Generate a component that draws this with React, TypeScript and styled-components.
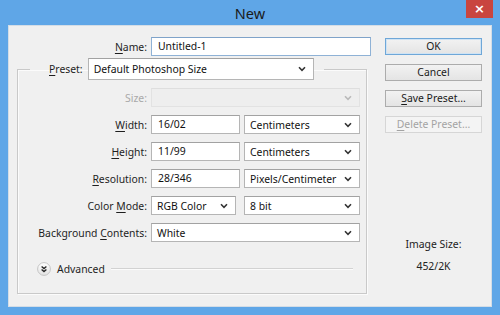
import React from "react";
import styled, { createGlobalStyle } from "styled-components";

const Global = createGlobalStyle`
  html, body { margin: 0; padding: 0; }
  body {
    width: 500px; height: 315px; overflow: hidden;
    font-family: "Noto Sans", "Segoe UI", sans-serif;
    font-size: 10.4px; color: #1e1e1e;
  }
  * { box-sizing: border-box; }
`;

const Window = styled.div`
  width: 500px;
  height: 315px;
  background: #5fa6e7;
  display: flex;
  flex-direction: column;
  padding: 0 8px 8px 8px;
`;

const TitleBar = styled.div`
  height: 25px;
  display: grid;
  grid-template-columns: 1fr auto 1fr;
  align-items: start;
`;

const Title = styled.div`
  grid-column: 2;
  font-size: 14.5px;
  line-height: 27px;
  color: #1a1a1a;
`;

const CloseButton = styled.div`
  grid-column: 3;
  justify-self: end;
  margin-right: -1px;
  width: 27px;
  height: 18px;
  background: #c9453f;
  color: #fff;
  font-size: 13px;
  font-weight: bold;
  line-height: 17px;
  text-align: center;
  font-family: "DejaVu Sans", sans-serif;
`;

const Client = styled.div`
  flex: 1;
  background: #f0f0f0;
  border: 1px solid #d4dde6;
  display: flex;
  padding: 11px 0 0 8px;
`;

const LeftCol = styled.div`
  width: 354px;
  display: flex;
  flex-direction: column;
`;

const NameRow = styled.div`
  display: grid;
  grid-template-columns: 130px 220px;
  column-gap: 4px;
  align-items: center;
`;

const Label = styled.label<{ $disabled?: boolean }>`
  text-align: right;
  white-space: nowrap;
  color: ${(p) => (p.$disabled ? "#a9a9a9" : "#1e1e1e")};
  u { text-decoration: underline; text-underline-offset: 2px; }
`;

const TextInput = styled.div<{ $focused?: boolean; $w?: number }>`
  height: 19px;
  width: ${(p) => (p.$w ? `${p.$w}px` : "100%")};
  flex: none;
  background: #fff;
  border: 1px solid ${(p) => (p.$focused ? "#8fb2d6" : "#b5b5b5")};
  border-top-color: ${(p) => (p.$focused ? "#7fa3c9" : "#a2a2a2")};
  padding: 0 6px;
  line-height: 17px;
  color: #111;
  white-space: nowrap;
`;

const SelectBox = styled.div<{ $w?: number; $h?: number; $disabled?: boolean }>`
  height: ${(p) => p.$h ?? 19}px;
  width: ${(p) => (p.$w ? `${p.$w}px` : "auto")};
  flex: ${(p) => (p.$w ? "none" : "1")};
  background: ${(p) => (p.$disabled ? "#eeeeee" : "#fff")};
  border: 1px solid ${(p) => (p.$disabled ? "#e2e2e2" : "#b5b5b5")};
  border-top-color: ${(p) => (p.$disabled ? "#dedede" : "#a2a2a2")};
  display: flex;
  align-items: center;
  justify-content: space-between;
  padding: 0 7px 0 5px;
  color: #111;
  white-space: nowrap;
`;

const Chevron = ({ light }: { light?: boolean }) => (
  <svg width="8" height="6" viewBox="0 0 8 6">
    <path
      d="M1 1.3 L4 4.3 L7 1.3"
      fill="none"
      stroke={light ? "#b9b9b9" : "#333"}
      strokeWidth="1.6"
    />
  </svg>
);

const Group = styled.fieldset`
  margin: 2px 0 0 0;
  width: 350px;
  border: 1px solid #c9c9c9;
  box-shadow: inset 1px 1px 0 #fbfbfb, 1px 1px 0 #fbfbfb;
  padding: 0 6px 17px 0;
`;

const Legend = styled.legend`
  margin-left: 12px;
  padding: 0 10px 0 19px;
  display: flex;
  align-items: center;
  gap: 5px;
`;

const FieldGrid = styled.div`
  margin-top: 8px;
  display: grid;
  grid-template-columns: 129px 1fr;
  column-gap: 4px;
  row-gap: 8px;
  align-items: center;
`;

const Pair = styled.div<{ $gap: number }>`
  display: flex;
  gap: ${(p) => p.$gap}px;
`;

const AdvancedRow = styled.div`
  margin-top: 19px;
  padding-left: 19px;
  padding-right: 7px;
  display: flex;
  align-items: center;
  gap: 6px;
  height: 15px;
`;

const Rule = styled.div`
  flex: 1;
  height: 2px;
  border-top: 1px solid #d2d2d2;
  border-bottom: 1px solid #fbfbfb;
`;

const RightCol = styled.div`
  margin-left: 14px;
  padding-top: 1px;
  display: flex;
  flex-direction: column;
  gap: 9px;
  width: 97px;
`;

const Button = styled.div<{ $default?: boolean; $disabled?: boolean }>`
  height: 17px;
  width: 97px;
  border: 1px solid
    ${(p) => (p.$default ? "#6ea7d8" : p.$disabled ? "#d6d6d6" : "#acacac")};
  background: ${(p) =>
    p.$disabled
      ? "#f4f4f4"
      : "linear-gradient(#f2f2f2, #e4e4e4)"};
  box-shadow: ${(p) => (p.$default ? "inset 0 0 0 1px #cfe3f4" : "none")};
  color: ${(p) => (p.$disabled ? "#a3a3a3" : "#1a1a1a")};
  text-align: center;
  line-height: 15px;
  white-space: nowrap;
  u { text-decoration: underline; text-underline-offset: 2px; }
`;

const ImageSize = styled.div`
  margin-top: 95px;
  display: flex;
  flex-direction: column;
  align-items: center;
  gap: 8px;
  line-height: 14px;
  color: #222;
`;

const AdvancedIcon = () => (
  <svg width="14" height="14" viewBox="0 0 14 14">
    <defs>
      <linearGradient id="adv" x1="0" y1="0" x2="0" y2="1">
        <stop offset="0" stopColor="#ffffff" />
        <stop offset="1" stopColor="#e2e2e2" />
      </linearGradient>
    </defs>
    <circle cx="7" cy="7" r="6.4" fill="url(#adv)" stroke="#c4c4c4" strokeWidth="1" />
    <path d="M4.6 4.4 L7 6.6 L9.4 4.4 M4.6 7.4 L7 9.6 L9.4 7.4" fill="none" stroke="#2a2a2a" strokeWidth="1.3" />
  </svg>
);

export default function App() {
  return (
    <>
      <Global />
      <Window>
        <TitleBar>
          <Title>New</Title>
          <CloseButton>×</CloseButton>
        </TitleBar>
        <Client>
          <LeftCol>
            <NameRow>
              <Label>
                <u>N</u>ame:
              </Label>
              <TextInput $focused>Untitled-1</TextInput>
            </NameRow>
            <Group>
              <Legend>
                <Label>
                  <u>P</u>reset:
                </Label>
                <SelectBox $w={226} $h={22}>
                  Default Photoshop Size
                  <Chevron />
                </SelectBox>
              </Legend>
              <FieldGrid>
                <Label $disabled>Size:</Label>
                <SelectBox $disabled>
                  <span />
                  <Chevron light />
                </SelectBox>

                <Label>
                  <u>W</u>idth:
                </Label>
                <Pair $gap={4}>
                  <TextInput $w={89}>16/02</TextInput>
                  <SelectBox>
                    Centimeters
                    <Chevron />
                  </SelectBox>
                </Pair>

                <Label>
                  <u>H</u>eight:
                </Label>
                <Pair $gap={4}>
                  <TextInput $w={89}>11/99</TextInput>
                  <SelectBox>
                    Centimeters
                    <Chevron />
                  </SelectBox>
                </Pair>

                <Label>
                  <u>R</u>esolution:
                </Label>
                <Pair $gap={4}>
                  <TextInput $w={89}>28/346</TextInput>
                  <SelectBox>
                    Pixels/Centimeter
                    <Chevron />
                  </SelectBox>
                </Pair>

                <Label>
                  Color <u>M</u>ode:
                </Label>
                <Pair $gap={8}>
                  <SelectBox $w={85}>
                    RGB Color
                    <Chevron />
                  </SelectBox>
                  <SelectBox>
                    8 bit
                    <Chevron />
                  </SelectBox>
                </Pair>

                <Label>
                  Background <u>C</u>ontents:
                </Label>
                <SelectBox>
                  White
                  <Chevron />
                </SelectBox>
              </FieldGrid>
              <AdvancedRow>
                <AdvancedIcon />
                <span>Advanced</span>
                <Rule />
              </AdvancedRow>
            </Group>
          </LeftCol>
          <RightCol>
            <Button $default>OK</Button>
            <Button>Cancel</Button>
            <Button>
              <u>S</u>ave Preset...
            </Button>
            <Button $disabled>
              <u>D</u>elete Preset...
            </Button>
            <ImageSize>
              <span>Image Size:</span>
              <span>452/2K</span>
            </ImageSize>
          </RightCol>
        </Client>
      </Window>
    </>
  );
}
